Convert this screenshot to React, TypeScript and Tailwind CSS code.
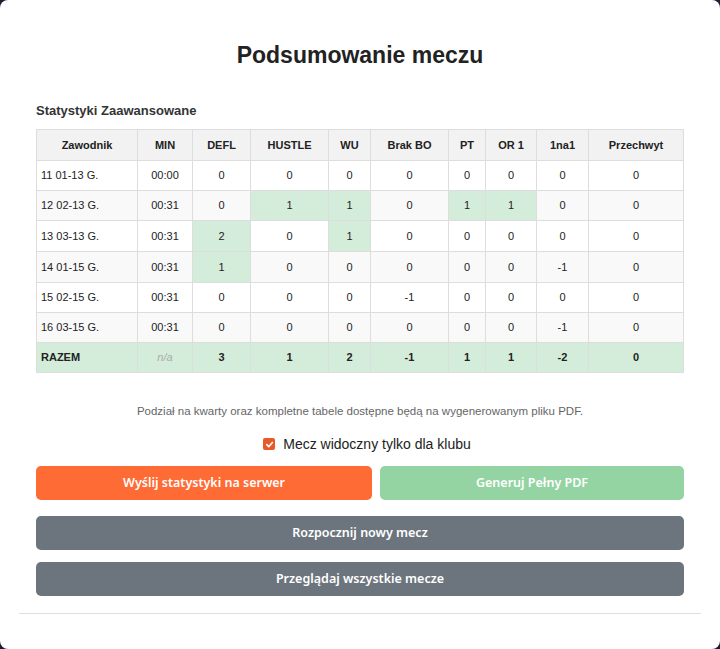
import React from 'react'

type Row = {
  name: string
  min: string
  h: string
  vals: number[]
}

const cols = ['DEFL', 'HUSTLE', 'WU', 'Brak BO', 'PT', 'OR 1', '1na1', 'Przechwyt']
const widths = ['w-[101px]', 'w-[55px]', 'w-[58px]', 'w-[78px]', 'w-[42px]', 'w-[78px]', 'w-[37px]', 'w-[51px]', 'w-[52px]', '']

const rows: Row[] = [
  { name: '11 01-13 G.', min: '00:00', h: 'h-[30px]', vals: [0, 0, 0, 0, 0, 0, 0, 0] },
  { name: '12 02-13 G.', min: '00:31', h: 'h-[30px]', vals: [0, 1, 1, 0, 1, 1, 0, 0] },
  { name: '13 03-13 G.', min: '00:31', h: 'h-[31px]', vals: [2, 0, 1, 0, 0, 0, 0, 0] },
  { name: '14 01-15 G.', min: '00:31', h: 'h-[31px]', vals: [1, 0, 0, 0, 0, 0, -1, 0] },
  { name: '15 02-15 G.', min: '00:31', h: 'h-[30px]', vals: [0, 0, 0, -1, 0, 0, 0, 0] },
  { name: '16 03-15 G.', min: '00:31', h: 'h-[30px]', vals: [0, 0, 0, 0, 0, 0, -1, 0] },
]

const totals = [3, 1, 2, -1, 1, 1, -2, 0]

export default function App() {
  return (
    <div className="min-h-[649px] bg-[#1b2030]">
      <div className="bg-white rounded-lg min-h-[649px] px-[19px] pt-[41px] font-['Liberation_Sans',Arial,sans-serif]">
        <h1 className="text-center text-[23px] font-bold text-[#222] leading-[28px]">Podsumowanie meczu</h1>

        <div className="px-[17px] mt-[34px]">
          <h3 className="text-[13px] font-bold text-[#333] leading-[16px] mb-[10px]">Statystyki Zaawansowane</h3>

          <table className="w-full border-collapse table-fixed text-[11px] text-[#222]">
            <thead>
              <tr className="bg-[#f2f2f2] h-[31px]">
                <th className={`border border-[#ddd] font-bold ${widths[0]}`}>Zawodnik</th>
                <th className={`border border-[#ddd] font-bold ${widths[1]}`}>MIN</th>
                {cols.map((c, i) => (
                  <th key={c} className={`border border-[#ddd] font-bold ${widths[i + 2]}`}>{c}</th>
                ))}
              </tr>
            </thead>
            <tbody>
              {rows.map((r, ri) => (
                <tr key={r.name} className={`${r.h} ${ri % 2 === 1 ? 'bg-[#f9f9f9]' : 'bg-white'}`}>
                  <td className="border border-[#ddd] px-[4px]">{r.name}</td>
                  <td className="border border-[#ddd] text-center">{r.min}</td>
                  {r.vals.map((v, i) => (
                    <td
                      key={i}
                      className={`border border-[#ddd] text-center ${v > 0 ? 'bg-[#d4edda]' : ''}`}
                    >
                      {v}
                    </td>
                  ))}
                </tr>
              ))}
              <tr className="h-[30px] bg-[#d4edda] font-bold">
                <td className="border border-[#ddd] px-[4px]">RAZEM</td>
                <td className="border border-[#ddd] text-center italic font-normal text-[#aaa]">n/a</td>
                {totals.map((v, i) => (
                  <td key={i} className="border border-[#ddd] text-center">{v}</td>
                ))}
              </tr>
            </tbody>
          </table>

          <p className="text-center text-[11.5px] text-[#666] mt-[31px] leading-[14px]">
            Podział na kwarty oraz kompletne tabele dostępne będą na wygenerowanym pliku PDF.
          </p>

          <label className="flex items-center justify-center gap-[8px] mt-[17px] pl-[14px] text-[14px] text-[#222] leading-[18px]">
            <span className="w-[12px] h-[12px] rounded-[2px] bg-[#e8592a] flex items-center justify-center">
              <svg width="9" height="9" viewBox="0 0 10 10" fill="none">
                <path d="M2 5.2 L4.2 7.4 L8.2 2.8" stroke="white" strokeWidth="1.8" strokeLinecap="round" strokeLinejoin="round" />
              </svg>
            </span>
            Mecz widoczny tylko dla klubu
          </label>

          <div className="flex gap-[8px] mt-[13px] font-['Noto_Sans',sans-serif] text-[12.5px] font-semibold text-white">
            <button className="w-[336px] h-[34px] rounded-[5px] bg-[#ff6b35]">Wyślij statystyki na serwer</button>
            <button className="flex-1 h-[34px] rounded-[5px] bg-[#94d3a2]">Generuj Pełny PDF</button>
          </div>
          <button className="mt-[16px] w-full h-[34px] rounded-[5px] bg-[#6c757d] font-['Noto_Sans',sans-serif] text-[12.5px] font-semibold text-white">
            Rozpocznij nowy mecz
          </button>
          <button className="mt-[12px] w-full h-[34px] rounded-[5px] bg-[#6c757d] font-['Noto_Sans',sans-serif] text-[12.5px] font-semibold text-white">
            Przeglądaj wszystkie mecze
          </button>
        </div>

        <hr className="mt-[17px] border-0 border-t border-[#ddd]" />
      </div>
    </div>
  )
}
